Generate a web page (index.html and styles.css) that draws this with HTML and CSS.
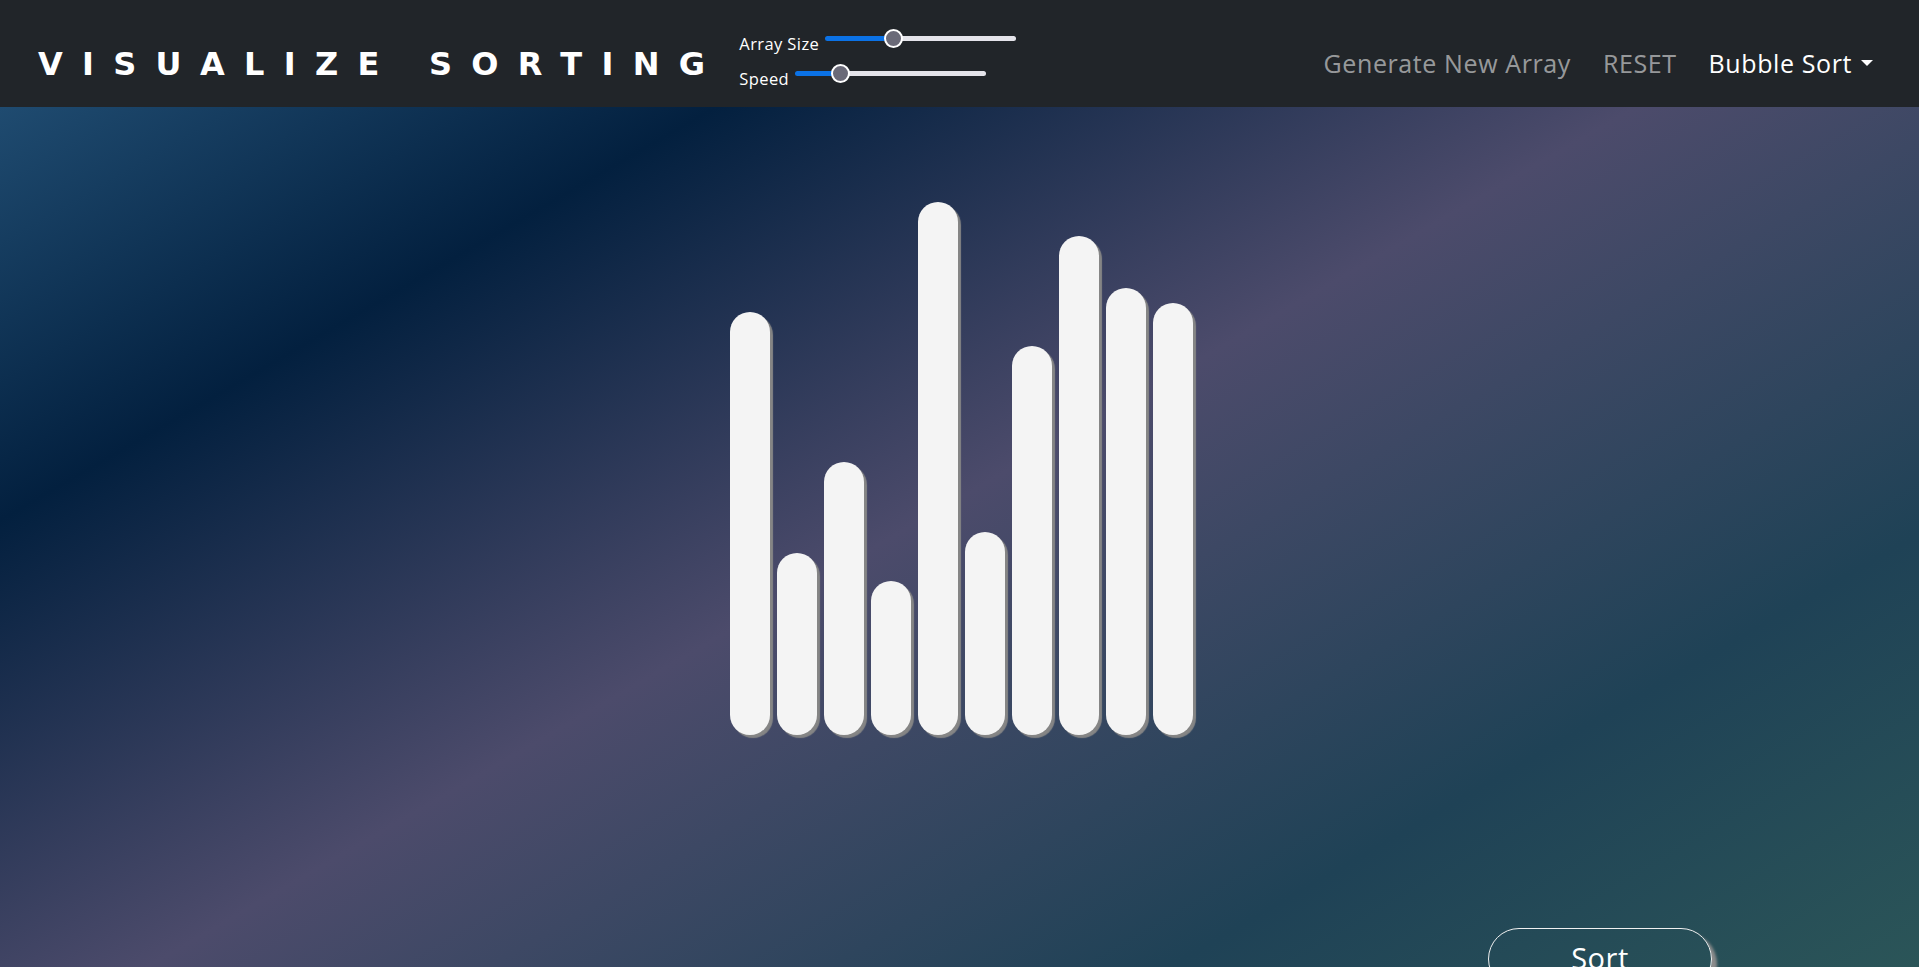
FILE: index.html
```html
<!DOCTYPE html>
<html lang="en">
<head>
<meta charset="utf-8">
<title>Visualize Sorting</title>
<link rel="stylesheet" href="styles.css">
</head>
<body>
<nav class="navbar">
  <div class="brand">VISUALIZE SORTING</div>
  <form class="controls">
    <div class="control-row">
      <label for="size">Array Size</label>
      <input type="range" id="size" class="slider" min="0" max="100" step="any" value="34.4" style="--fill:36%">
    </div>
    <div class="control-row">
      <label for="speed">Speed</label>
      <input type="range" id="speed" class="slider" min="0" max="100" step="any" value="20.8" style="--fill:23.7%">
    </div>
  </form>
  <ul class="nav-links">
    <li><a class="nav-link" href="#">Generate New Array</a></li>
    <li><a class="nav-link" href="#">RESET</a></li>
    <li><a class="nav-link active dropdown-toggle" href="#">Bubble Sort</a></li>
  </ul>
</nav>
<main class="stage">
  <div class="bars">
    <div class="bar" style="height:423px"></div>
    <div class="bar" style="height:182px"></div>
    <div class="bar" style="height:273px"></div>
    <div class="bar" style="height:154px"></div>
    <div class="bar" style="height:533px"></div>
    <div class="bar" style="height:203px"></div>
    <div class="bar" style="height:389px"></div>
    <div class="bar" style="height:499px"></div>
    <div class="bar" style="height:447px"></div>
    <div class="bar" style="height:432px"></div>
  </div>
  <div class="actions">
    <button class="sort-btn" type="button">Sort</button>
  </div>
</main>
</body>
</html>
```

FILE: styles.css
```css
html, body {
  margin: 0;
  padding: 0;
}

body {
  font-family: "Open Sans", "Noto Sans", sans-serif;
  background: #212529;
  overflow: hidden;
}

.navbar {
  display: flex;
  align-items: center;
  height: 107px;
  box-sizing: border-box;
  padding: 18px 46px 0 38px;
  background: #212529;
}

.brand {
  font-family: "DejaVu Sans", sans-serif;
  font-weight: 700;
  font-size: 32px;
  line-height: 1;
  letter-spacing: 19.3px;
  color: #ffffff;
  margin-right: 15px;
  padding-top: 3px;
  white-space: nowrap;
}

.controls {
  display: flex;
  flex-direction: column;
  margin: 0 0 4px 0;
}

.control-row {
  display: flex;
  align-items: center;
  height: 35px;
}

.control-row label {
  font-size: 16.5px;
  line-height: 35px;
  color: #ffffff;
  letter-spacing: 0.4px;
  margin-right: 6px;
  white-space: nowrap;
}

.slider {
  -webkit-appearance: none;
  appearance: none;
  width: 191px;
  height: 19px;
  margin: 0 0 10px 0;
  padding: 0;
  background: transparent;
}

.slider::-webkit-slider-runnable-track {
  height: 5px;
  border-radius: 3px;
  background: linear-gradient(to right, #0b72e6 var(--fill), #e4e4ea var(--fill));
}

.slider::-webkit-slider-thumb {
  -webkit-appearance: none;
  appearance: none;
  width: 19px;
  height: 19px;
  box-sizing: border-box;
  border-radius: 50%;
  background: #6a6a78;
  border: 2px solid #ffffff;
  margin-top: -7px;
}

.nav-links {
  display: flex;
  align-items: center;
  list-style: none;
  margin: 1px 0 0 auto;
  padding: 0;
}

.nav-link {
  display: flex;
  align-items: center;
  font-size: 25px;
  line-height: 1;
  letter-spacing: 0.6px;
  padding: 0 16px;
  color: rgba(255, 255, 255, 0.55);
  text-decoration: none;
  white-space: nowrap;
}

.nav-links li:last-child .nav-link {
  padding-right: 0;
}

.nav-link.active {
  color: #ffffff;
}

.dropdown-toggle::after {
  content: "";
  width: 0;
  height: 0;
  border-top: 6px solid #ffffff;
  border-left: 6px solid transparent;
  border-right: 6px solid transparent;
  margin-left: 9px;
}

.stage {
  height: 860px;
  overflow: hidden;
  background: linear-gradient(150deg, #1f4b70 0%, #03203f 21%, #4c4b6b 48%, #1f4256 78%, #2b5558 100%);
}

.bars {
  display: flex;
  justify-content: center;
  align-items: flex-end;
  gap: 7px;
  height: 533px;
  padding: 95px 0 0 4px;
}

.bar {
  width: 40px;
  border-radius: 20px;
  background: #f4f4f4;
  box-shadow: 3px 3px 1px #858585;
}

.actions {
  display: flex;
  justify-content: flex-end;
  padding: 193px 207px 0 0;
}

.sort-btn {
  width: 224px;
  height: 62px;
  border: 1px solid #f0f0f0;
  border-radius: 31px;
  background: transparent;
  color: #ffffff;
  font-family: "Open Sans", "Noto Sans", sans-serif;
  font-size: 29px;
  line-height: 1;
  letter-spacing: 0.5px;
  padding: 0 0 4px 0;
  box-shadow: 5px 5px 3px #8c8c8c;
  cursor: pointer;
}
```
